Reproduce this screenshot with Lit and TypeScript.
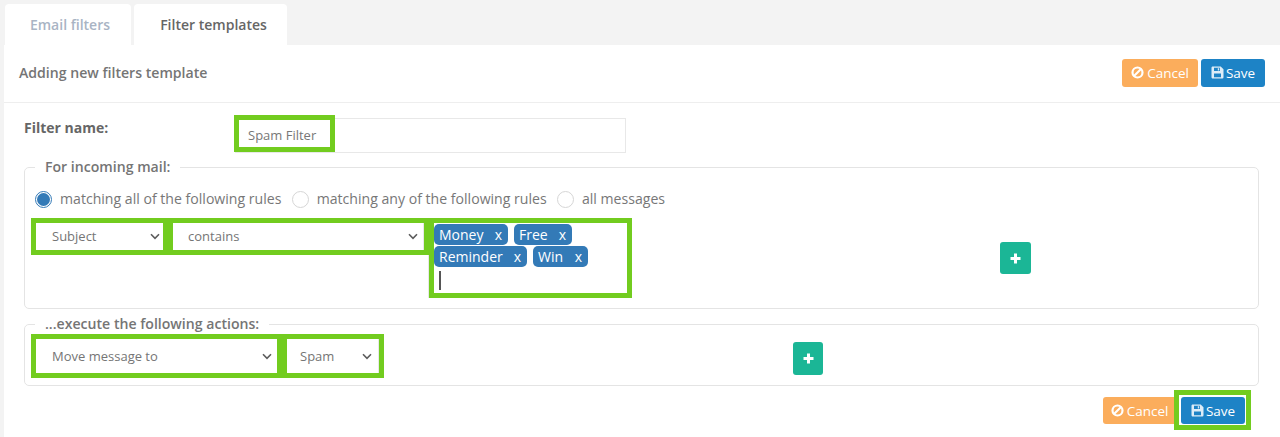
import { LitElement, html, css } from "lit";
import { customElement } from "lit/decorators.js";

const chevron = html`<svg class="chev" width="10" height="7" viewBox="0 0 10 7"><path d="M1 1.300 5 5.300l4-4" fill="none" stroke="#5c5c5c" stroke-width="1.600"/></svg>`;
const ban = html`<svg class="ic" width="13" height="13" viewBox="0 0 13 13"><circle cx="6.5" cy="6.5" r="5" fill="none" stroke="#fff" stroke-width="2.2"/><path d="M3 10 10 3" stroke="#fff" stroke-width="2.2"/></svg>`;
const save = html`<svg class="ic" width="13" height="13" viewBox="0 0 13 13"><path fill="#fff" fill-opacity=".85" fill-rule="evenodd" d="M1.300 0.500h8.400L12.500 3.300v8a1.200 1.200 0 0 1-1.200 1.200H1.300A1.200 1.200 0 0 1 .5 11.300V1.700A1.200 1.200 0 0 1 1.300.5ZM3 1.800V5h6V1.800ZM3 7.500v3.700h7V7.500ZM6.800 2.300h1.400v2.200H6.800Z"/></svg>`;
const plus = html`<svg width="11" height="11" viewBox="0 0 11 11"><path d="M4 .5h3V4h3.500v3H7v3.500H4V7H.5V4H4Z" fill="#fff"/></svg>`;

@customElement("app-root")
export class AppRoot extends LitElement {
  static styles = css`
    :host { display: block; width: 1280px; height: 437px; overflow: hidden; background: #f3f3f3; font: 14px/20px "Open Sans", sans-serif; color: #777; }
    .tabs { display: flex; gap: 3px; padding: 4px 0 0 5px; height: 45px; box-sizing: border-box; }
    .tab { background: #fff; border-radius: 4px 4px 0 0; height: 41px; box-sizing: border-box; display: flex; align-items: center; justify-content: center; font-weight: 600; }
    .t1 { width: 126px; color: #a9b4c4; padding-left: 4px; }
    .t2 { width: 153px; color: #666; padding-left: 6px; }
    .panel { margin-left: 4px; background: #fff; height: 392px; }
    .head { height: 58px; box-sizing: border-box; border-bottom: 1px solid #eee; display: flex; align-items: center; padding: 0 15px 0 15px; }
    .title { flex: 1; color: #757575; font-weight: 600; font-size: 14.1px; margin-top: -1px; }
    .btn { height: 28px; border-radius: 3px; box-sizing: border-box; color: #fff; display: flex; align-items: center; justify-content: center; gap: 3px; font-size: 13.5px; }
    .cancel { background: #fbad5c; width: 76px; }
    .save { background: #1d83c6; width: 64px; gap: 2px; }
    .head .btns { display: flex; gap: 3px; margin-top: -2px; }
    .name { display: flex; padding: 12px 0 0 20px; height: 54px; box-sizing: border-box; }
    .name b { width: 211px; font-weight: 700; color: #666; margin-top: 3px; }
    .input { width: 391px; height: 35px; box-sizing: border-box; border: 1px solid #e8e8e8; margin-top: 3px; }
    .hl { border: 5px solid #72cc1f; box-sizing: border-box; background: #fff; }
    .namehl { width: 101px; height: 37px; margin: -4px 0 0 -2px; display: flex; align-items: center; padding: 2px 0 0 9px; font-size: 13px; }
    fieldset { margin: 0 21px 0 20px; padding: 0; border: 1px solid #e4e4e4; border-radius: 5px; }
    legend { margin-left: 10px; padding: 0 10px; color: #757575; font-weight: 600; font-size: 14.1px; line-height: 20px; }
    .f1 { height: 152px; box-sizing: border-box; }
    .f2 { height: 72px; box-sizing: border-box; margin-top: 5px; }
    .radios { display: flex; align-items: center; padding: 12px 0 0 10px; height: 20px; font-size: 14.1px; }
    .radio { width: 17px; height: 17px; border-radius: 50%; border: 1px solid #d6d6d6; box-sizing: border-box; margin-right: 8px; display: flex; align-items: center; justify-content: center; }
    .radio.on { border-color: #337ab7; }
    .radio.on i { width: 13px; height: 13px; border-radius: 50%; background: #337ab7; display: block; }
    .rt { margin-right: 10.3px; }
    .row { display: flex; margin-left: 6px; }
    .r1 { margin-top: 9px; }
    .sel { height: 37px; display: flex; align-items: center; justify-content: space-between; font-size: 13px; color: #757575; }
    .sel span { display: block; }
    .chev { flex: none; }
    .s1 { width: 137px; padding: 0 3px 1px 16px; }
    .s2 { width: 261px; padding: 0 6px 1px 15px; box-shadow: inset -1px 0 #e8e8e8; position: relative; z-index: 1; }
    .tagbox { width: 203px; height: 80px; box-shadow: -1px 0 #e8e8e8; display: flex; flex-wrap: wrap; align-content: flex-start; column-gap: 6px; padding-top: 1px; }
    .tag { background: #337ab7; color: #fff; border-radius: 5px; height: 21px; line-height: 21px; display: flex; justify-content: space-between; padding: 0 6px 0 5px; box-sizing: border-box; font-size: 14px; }
    .cursor { width: 2px; height: 19px; background: #555; margin: 3px 0 0 5px; flex-basis: 2px; }
    .brk { flex-basis: 100%; height: 1px; }
    .plus { width: 31px; height: 32px; background: #1bb696; border-radius: 3px; display: flex; align-items: center; justify-content: center; }
    .p1 { margin: 24px 0 0 368px; }
    .p2 { width: 30px; height: 33px; margin: 8px 0 0 409px; }
    .s3 { width: 251px; height: 44px; padding: 0 5px 0 16px; }
    .s4 { width: 102px; height: 44px; padding: 0 7px 0 13px; box-shadow: inset -1px 0 #e8e8e8; }
    .foot { display: flex; justify-content: flex-end; padding: 4px 29px 0 0; align-items: flex-start; }
    .foot .cancel { height: 27px; margin: 7px -5px 0 0; padding-right: 3px; }
    .foot .hl { width: 77px; height: 40px; }
    .foot .hl .save { height: 27px; width: 64px; margin: 2px; }
  `;

  tag(text: string, w: number) {
    return html`<div class="tag" style="width:${w}px"><span>${text}</span><span>x</span></div>`;
  }

  render() {
    return html`
      <div class="tabs"><div class="tab t1">Email filters</div><div class="tab t2">Filter templates</div></div>
      <div class="panel">
        <div class="head">
          <div class="title">Adding new filters template</div>
          <div class="btns">
            <div class="btn cancel">${ban}Cancel</div>
            <div class="btn save">${save}Save</div>
          </div>
        </div>
        <div class="name">
          <b>Filter name:</b>
          <div class="input"><div class="hl namehl">Spam Filter</div></div>
        </div>
        <fieldset class="f1">
          <legend>For incoming mail:</legend>
          <div class="radios">
            <div class="radio on"><i></i></div><div class="rt">matching all of the following rules</div>
            <div class="radio"></div><div class="rt">matching any of the following rules</div>
            <div class="radio"></div><div class="rt">all messages</div>
          </div>
          <div class="row r1">
            <div class="hl sel s1"><span>Subject</span>${chevron}</div>
            <div class="hl sel s2"><span>contains</span>${chevron}</div>
            <div class="hl tagbox">
              ${this.tag("Money", 74)}${this.tag("Free", 58)}<div class="brk"></div>
              ${this.tag("Reminder", 93)}${this.tag("Win", 55)}<div class="brk"></div>
              <div class="cursor"></div>
            </div>
            <div class="plus p1">${plus}</div>
          </div>
        </fieldset>
        <fieldset class="f2">
          <legend>...execute the following actions:</legend>
          <div class="row">
            <div class="hl sel s3"><span>Move message to</span>${chevron}</div>
            <div class="hl sel s4"><span>Spam</span>${chevron}</div>
            <div class="plus p2">${plus}</div>
          </div>
        </fieldset>
        <div class="foot">
          <div class="btn cancel">${ban}Cancel</div>
          <div class="hl"><div class="btn save">${save}Save</div></div>
        </div>
      </div>
    `;
  }
}
